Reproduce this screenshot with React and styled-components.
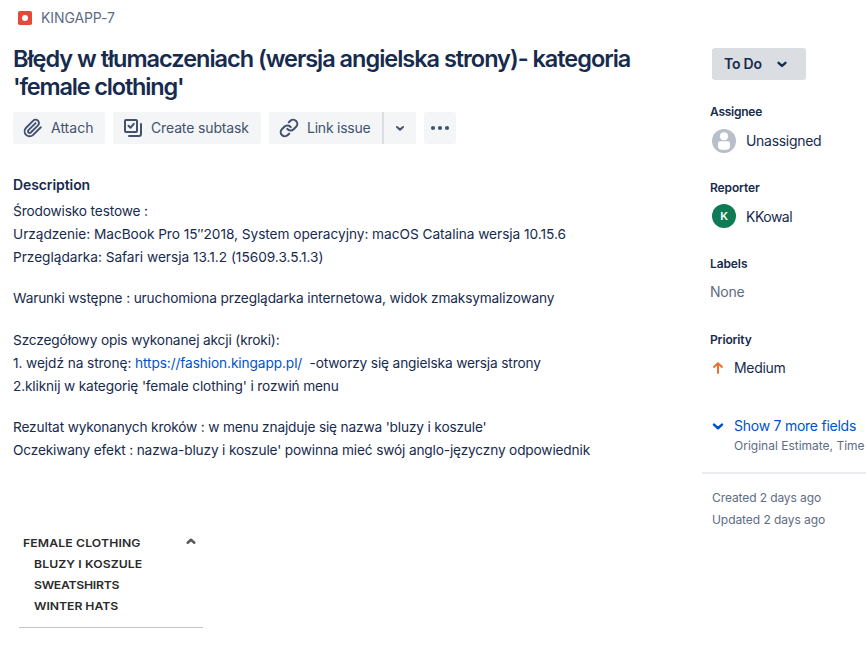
import React from "react";
import styled, { createGlobalStyle } from "styled-components";

const Global = createGlobalStyle`
  *, *::before, *::after { box-sizing: border-box; }
  body { margin: 0; background: #fff; color: #172b4d; font: 14px/20px Inter, "Liberation Sans", sans-serif; }
  h1, h2, h3, p { margin: 0; }
  button { border: 0; padding: 0; font: inherit; }
`;
const Text = styled.span`
  white-space: pre;
  letter-spacing: ${(p) => p.$track || 0}px;
`;
const Page = styled.div`
  display: grid;
  grid-template-columns: 702px 164px;
  width: 866px;
  height: 662px;
  overflow: hidden;
`;
const Main = styled.main`
  padding: 8px 0 0 13px;
`;
const Crumb = styled.div`
  display: flex;
  align-items: center;
  gap: 9px;
  height: 20px;
  padding-left: 5px;
  color: #5e6c84;
`;
const Title = styled.h1`
  display: flex;
  flex-direction: column;
  align-items: flex-start;
  margin-top: 17px;
  font-size: 23.5px;
  line-height: 28px;
  font-weight: 570;
`;
const Toolbar = styled.div`
  display: flex;
  gap: 8px;
  height: 32px;
  margin-top: 11px;
`;
const Group = styled.div`
  display: flex;
  gap: 2px;
  border-radius: 3px;
  background: #dadde3;
  overflow: hidden;
`;
const Button = styled.button`
  display: flex;
  align-items: center;
  gap: 8px;
  width: ${(p) => p.$width}px;
  height: 32px;
  padding-left: ${(p) => p.$pad || 10}px;
  border-radius: ${(p) => (p.$flat ? 0 : 3)}px;
  background: #f4f5f7;
  color: #42526e;
`;
const Heading = styled.h2`
  margin-top: 31px;
  font-size: 14px;
  line-height: 20px;
  font-weight: 600;
`;
const Paragraph = styled.p`
  display: flex;
  flex-direction: column;
  align-items: flex-start;
  margin-top: ${(p) => p.$gap}px;
  font-size: 13.7px;
  line-height: 23px;
`;
const Link = styled.a`
  color: #0052cc;
`;
const Menu = styled.section`
  width: 184px;
  margin: 70px 0 0 6px;
  padding: 0 0 10px 4px;
  border-bottom: 1px solid #c4c4c4;
  color: #2b2b2b;
  font-size: 11px;
  font-weight: 620;
`;
const MenuRow = styled.div`
  display: flex;
  align-items: center;
  justify-content: space-between;
  height: 21.2px;
  padding: 0 6px 0 ${(p) => (p.$nested ? 11.3 : 0)}px;
`;
const MenuText = styled(Text)`
  transform: scaleX(1.11);
  transform-origin: left;
`;
const Caret = styled.span`
  display: flex;
  color: #5a5a5a;
  margin-top: -3px;
`;

const Side = styled.aside`
  padding-top: 48px;
`;
const Status = styled.button`
  display: flex;
  align-items: center;
  gap: 13px;
  width: 94px;
  height: 32px;
  margin-left: 10px;
  padding-left: 12px;
  border-radius: 3px;
  background: #dadde2;
  color: #172b4d;
  font-weight: 600;
`;
const Field = styled.section`
  height: 76px;
  padding-left: 8px;
  &:first-of-type { margin-top: 22px; }
`;
const Label = styled.h3`
  font-size: 12px;
  line-height: 20px;
  font-weight: 600;
`;
const Value = styled.div`
  display: flex;
  align-items: center;
  gap: ${(p) => p.$gap || 0}px;
  height: 24px;
  margin-top: ${(p) => p.$top}px;
  padding-left: ${(p) => p.$pad || 0}px;
  color: ${(p) => p.$color || "#172b4d"};
`;
const Name = styled(Text)`
  padding-top: ${(p) => p.$drop || 0}px;
`;
const Avatar = styled.span`
  display: grid;
  place-items: center;
  width: 24px;
  height: 24px;
  border-radius: 50%;
  background: #0f7b55;
  color: #fff;
  font-size: 11px;
  font-weight: 600;
`;
const Small = styled.div`
  padding-left: ${(p) => p.$pad}px;
  color: #5e6c84;
  font-size: 12px;
  line-height: ${(p) => p.$line || 20}px;
  white-space: nowrap;
`;
const More = styled.div`
  display: flex;
  align-items: center;
  gap: 8px;
  height: 20px;
  margin-top: 10px;
  padding-left: 8px;
  color: #0052cc;
`;
const Divider = styled.hr`
  height: 2px;
  margin: 16px 0 13px;
  border: 0;
  background: #ebecf0;
`;

const Chevron = ({ size = 12, up, stroke = 2 }) => (
  <svg width={size} height={size} viewBox="0 0 12 12" fill="none" stroke="currentColor" strokeWidth={stroke} strokeLinecap="round" strokeLinejoin="round">
    <path d={up ? "M2.7 7.7 6 4.8 9.3 7.7" : "M3 5 6 7.7 9 5"} />
  </svg>
);
const BugIcon = () => (
  <svg width="14" height="14" viewBox="0 0 14 14">
    <rect width="14" height="14" rx="1.8" fill="#e5493a" />
    <circle cx="7" cy="7" r="3" fill="#fff" />
  </svg>
);
const ClipIcon = () => (
  <svg width="20" height="20" viewBox="0 0 24 24" fill="none" stroke="currentColor" strokeWidth="2.3" strokeLinecap="round" strokeLinejoin="round">
    <path d="m21.4 11.05-9.19 9.19a6 6 0 0 1-8.49-8.49l8.57-8.57A4 4 0 1 1 18 8.84l-8.59 8.57a2 2 0 0 1-2.83-2.83l8.49-8.48" />
  </svg>
);
const SubtaskIcon = () => (
  <svg width="20" height="20" viewBox="0 0 20 20" fill="none" stroke="currentColor" strokeWidth="2" strokeLinecap="round" strokeLinejoin="round">
    <rect x="2" y="2" width="12" height="12" rx="1" />
    <path d="m5.5 7.8 2 2 3.3-4M18 6v10a2 2 0 0 1-2 2H6" />
  </svg>
);
const ChainIcon = () => (
  <svg width="20" height="20" viewBox="0 0 24 24" fill="none" stroke="currentColor" strokeWidth="2.5" strokeLinecap="round" strokeLinejoin="round">
    <path d="M10 13a5 5 0 0 0 7.54.54l3-3a5 5 0 0 0-7.07-7.07l-1.72 1.71" />
    <path d="M14 11a5 5 0 0 0-7.54-.54l-3 3a5 5 0 0 0 7.07 7.07l1.71-1.71" />
  </svg>
);
const DotsIcon = () => (
  <svg width="20" height="6" viewBox="0 0 20 6" fill="currentColor">
    <circle cx="3" cy="3" r="2.1" />
    <circle cx="10" cy="3" r="2.1" />
    <circle cx="17" cy="3" r="2.1" />
  </svg>
);
const PersonIcon = () => (
  <svg width="24" height="24" viewBox="0 0 24 24">
    <circle cx="12" cy="12" r="12" fill="#b8bfcb" />
    <circle cx="12" cy="7.3" r="4" fill="#fff" />
    <path d="M6 14.5a2.2 2.2 0 0 1 2.2-2.2h7.6a2.2 2.2 0 0 1 2.2 2.2V18q0 3-6 3t-6-3z" fill="#fff" />
  </svg>
);
const ArrowIcon = () => (
  <svg width="16" height="16" viewBox="0 0 16 16" fill="none" stroke="#e9722e" strokeWidth="2" strokeLinecap="round" strokeLinejoin="round">
    <path d="M8 13V3.2M4 6.9 8 3.2l4 3.7" />
  </svg>
);

export default function App() {
  return (
    <Page>
      <Global />
      <Main>
        <Crumb><BugIcon /><Text $track={-0.1}>KINGAPP-7</Text></Crumb>
        <Title>
          <Text $track={-1.02}>Błędy w tłumaczeniach (wersja angielska strony)- kategoria</Text>
          <Text $track={-1.18}>'female clothing'</Text>
        </Title>
        <Toolbar>
          <Button $width={92}><ClipIcon /><Text>Attach</Text></Button>
          <Button $width={148}><SubtaskIcon /><Text $track={-0.14}>Create subtask</Text></Button>
          <Group>
            <Button $width={113} $flat><ChainIcon /><Text $track={-0.23}>Link issue</Text></Button>
            <Button $width={32} $flat><Chevron /></Button>
          </Group>
          <Button $width={32} $pad={6}><DotsIcon /></Button>
        </Toolbar>
        <Heading><Text $track={-0.09}>Description</Text></Heading>
        <Paragraph $gap={5}>
          <Text $track={-0.15}>Środowisko testowe :</Text>
          <Text $track={-0.045}>Urządzenie: MacBook Pro 15′′2018, System operacyjny: macOS Catalina wersja 10.15.6</Text>
          <Text $track={-0.03}>Przeglądarka: Safari wersja 13.1.2 (15609.3.5.1.3)</Text>
        </Paragraph>
        <Paragraph $gap={18}>
          <Text $track={-0.15}>Warunki wstępne : uruchomiona przeglądarka internetowa, widok zmaksymalizowany</Text>
        </Paragraph>
        <Paragraph $gap={19}>
          <Text $track={-0.15}>Szczegółowy opis wykonanej akcji (kroki):</Text>
          <span>
            <Text $track={-0.085}>{"1. wejdź na stronę: "}</Text>
            <Link><Text $track={-0.1}>https://fashion.kingapp.pl/</Text></Link>
            <Text $track={-0.15}>{"  -otworzy się angielska wersja strony"}</Text>
          </span>
          <Text $track={-0.15}>2.kliknij w kategorię 'female clothing' i rozwiń menu</Text>
        </Paragraph>
        <Paragraph $gap={18}>
          <Text $track={-0.165}>Rezultat wykonanych kroków : w menu znajduje się nazwa 'bluzy i koszule'</Text>
          <Text $track={-0.165}>Oczekiwany efekt : nazwa-bluzy i koszule' powinna mieć swój anglo-języczny odpowiednik</Text>
        </Paragraph>
        <Menu>
          <MenuRow><MenuText $track={0.12}>FEMALE CLOTHING</MenuText><Caret><Chevron up stroke={2.5} /></Caret></MenuRow>
          <MenuRow $nested><MenuText $track={0.09}>BLUZY I KOSZULE</MenuText></MenuRow>
          <MenuRow $nested><MenuText $track={-0.24}>SWEATSHIRTS</MenuText></MenuRow>
          <MenuRow $nested><MenuText $track={-0.03}>WINTER HATS</MenuText></MenuRow>
        </Menu>
      </Main>
      <Side>
        <Status><Text $track={-0.2}>To Do</Text><Chevron size={14} /></Status>
        <Field>
          <Label><Text $track={-0.25}>Assignee</Text></Label>
          <Value $top={7} $pad={2} $gap={10}><PersonIcon /><Name $track={-0.3}>Unassigned</Name></Value>
        </Field>
        <Field>
          <Label><Text $track={-0.12}>Reporter</Text></Label>
          <Value $top={6} $pad={2} $gap={10}><Avatar>K</Avatar><Name $track={-0.5} $drop={2}>KKowal</Name></Value>
        </Field>
        <Field>
          <Label><Text $track={-0.1}>Labels</Text></Label>
          <Value $top={6} $color="#5e6c84"><Text $track={-0.2}>None</Text></Value>
        </Field>
        <Field>
          <Label><Text $track={-0.12}>Priority</Text></Label>
          <Value $top={6} $gap={8}><ArrowIcon /><Text $track={-0.32}>Medium</Text></Value>
        </Field>
        <More><Chevron size={16} stroke={1.9} /><Text $track={-0.25}>Show 7 more fields</Text></More>
        <Small $pad={32}><Text>Original Estimate, Time</Text></Small>
        <Divider />
        <Small $pad={10} $line={22}><Text $track={-0.1}>Created 2 days ago</Text></Small>
        <Small $pad={10} $line={22}><Text $track={-0.06}>Updated 2 days ago</Text></Small>
      </Side>
    </Page>
  );
}
